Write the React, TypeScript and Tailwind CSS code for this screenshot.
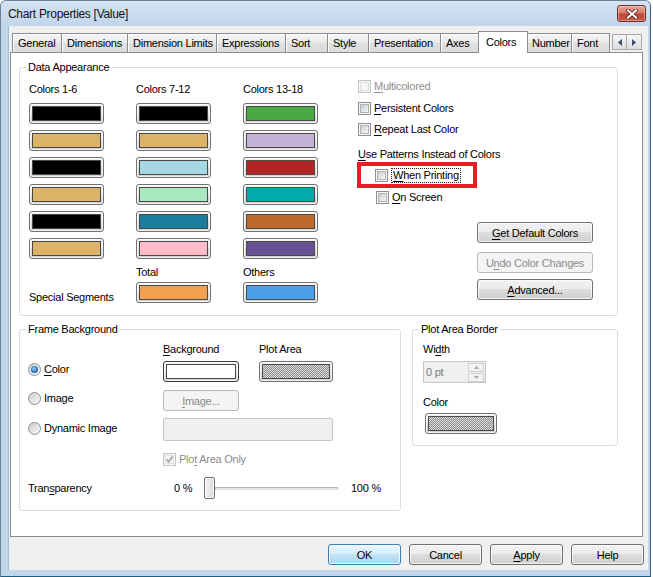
import React from "react";

const btnGrad =
  "bg-[image:linear-gradient(#f2f2f2,#ebebeb_50%,#dddddd_50%,#cfcfcf)]";

function U({ children }: { children: React.ReactNode }) {
  return <span className="underline decoration-1 underline-offset-[2px]">{children}</span>;
}

function Swatch({ color, w = "w-[75px]", focused }: { color: string; w?: string; focused?: boolean }) {
  return (
    <div
      className={`h-[21px] ${w} rounded-[3px] border ${
        focused ? "border-[#3c3c3c]" : "border-[#707070]"
      } bg-[image:linear-gradient(#f4f4f4,#e9e9e9_50%,#dcdcdc_50%,#d2d2d2)] p-[2px] shadow-[inset_0_0_0_1px_rgba(255,255,255,0.7)]`}
    >
      <div className={`h-full w-full border border-[#4a4a4a] ${color}`} />
    </div>
  );
}

const checker =
  "bg-[image:repeating-conic-gradient(#8c8c8c_0%_25%,#dedede_0%_50%)] bg-[length:2px_2px]";

function Check({ disabled, checked }: { disabled?: boolean; checked?: boolean }) {
  return (
    <div
      className={`flex h-[13px] w-[13px] shrink-0 items-center justify-center border ${
        disabled ? "border-[#c4c4c4]" : "border-[#8e8f8f]"
      } bg-[#f6f6f6] p-[1px]`}
    >
      <div
        className={`relative h-full w-full border ${
          disabled
            ? "border-[#dedede] bg-[#f4f4f4]"
            : "border-[#aeb3b9] bg-[image:linear-gradient(135deg,#c9cccf,#f7f7f7)]"
        }`}
      >
        {checked && (
          <svg viewBox="0 0 9 9" className="absolute left-[-1px] top-[-1px] h-[9px] w-[9px]">
            <path d="M1.5 4.5 L3.6 6.8 L7.6 1.5" fill="none" stroke="#a2a2a2" strokeWidth="1.6" />
          </svg>
        )}
      </div>
    </div>
  );
}

function Radio({ checked }: { checked?: boolean }) {
  return (
    <div className="flex h-[13px] w-[13px] shrink-0 items-center justify-center rounded-full border border-[#8e8f8f] bg-[image:linear-gradient(135deg,#c8cbce,#fbfbfb)]">
      {checked && (
        <div className="h-[7px] w-[7px] rounded-full bg-[image:radial-gradient(circle_at_45%_40%,#9ad4ff,#2a74b8_55%,#0f3e6e)]" />
      )}
    </div>
  );
}

function Btn({
  children,
  w,
  disabled,
  def,
}: {
  children: React.ReactNode;
  w: string;
  disabled?: boolean;
  def?: boolean;
}) {
  const look = disabled
    ? "border-[#b5b9bc] bg-[#f4f4f4] text-[#8a8a8a]"
    : def
    ? "border-[#3c7fb1] bg-[image:linear-gradient(#e8f5fc,#d8eefb_50%,#bfe3f8_50%,#a9d8f3)] shadow-[inset_0_0_0_1px_rgba(255,255,255,0.8)]"
    : `border-[#707070] ${btnGrad} shadow-[inset_0_0_0_1px_rgba(255,255,255,0.75)]`;
  return (
    <div
      className={`flex h-[21px] ${w} shrink-0 items-center justify-center rounded-[3px] border leading-[14px] ${look}`}
    >
      {children}
    </div>
  );
}

function Group({
  label,
  className,
  children,
}: {
  label: string;
  className: string;
  children: React.ReactNode;
}) {
  return (
    <div className={`relative shrink-0 rounded-[3px] border border-[#d5dfe5] ${className}`}>
      <span className="absolute left-[6px] top-[-8px] whitespace-nowrap bg-white px-[2px] leading-[14px]">
        {label}
      </span>
      {children}
    </div>
  );
}

const tabs: { t: string; w: string; sel?: boolean }[] = [
  { t: "General", w: "w-[49px]" },
  { t: "Dimensions", w: "w-[66px]" },
  { t: "Dimension Limits", w: "w-[89px]" },
  { t: "Expressions", w: "w-[69px]" },
  { t: "Sort", w: "w-[42px]" },
  { t: "Style", w: "w-[41px]" },
  { t: "Presentation", w: "w-[72px]" },
  { t: "Axes", w: "w-[40px]" },
  { t: "Colors", w: "w-[50px]", sel: true },
  { t: "Number", w: "w-[45px]" },
  { t: "Font", w: "w-[39px]" },
];

const swatchRows: string[][] = [
  ["bg-[#000000]", "bg-[#000000]", "bg-[#4aa845]"],
  ["bg-[#dbb46a]", "bg-[#dbb46a]", "bg-[#c3b1d6]"],
  ["bg-[#000000]", "bg-[#a6d8e3]", "bg-[#b02526]"],
  ["bg-[#dbb46a]", "bg-[#aae9bf]", "bg-[#02aaaa]"],
  ["bg-[#000000]", "bg-[#1b7d9e]", "bg-[#bd6a2c]"],
  ["bg-[#dbb46a]", "bg-[#ffbcc9]", "bg-[#695293]"],
];

function CheckRow({
  label,
  disabled,
  className,
}: {
  label: React.ReactNode;
  disabled?: boolean;
  className: string;
}) {
  return (
    <div className={`flex h-[14px] items-center ${className}`}>
      <Check disabled={disabled} />
      <span className={`ml-[3px] whitespace-nowrap leading-[14px] ${disabled ? "text-[#8d8d8d]" : ""}`}>
        {label}
      </span>
    </div>
  );
}

export default function App() {
  return (
    <div className="h-[577px] w-[653px] bg-white font-['Liberation_Sans',Arial,sans-serif] text-[11px] tracking-[-0.25px] text-black">
      <div className="flex h-[577px] w-[651px] flex-col rounded-t-[6px] border border-[#6a819b] border-b-[#1d5f82] border-r-[#3d5c7c] bg-[#c3d7ec]">
        {/* title bar */}
        <div className="flex h-[25px] shrink-0 items-center justify-between rounded-t-[5px] bg-[image:linear-gradient(#d5e3f2,#c1d5eb)] pl-[7px] pr-[4px]">
          <span className="text-[12px] tracking-[-0.3px] text-[#111]">Chart Properties [Value]</span>
          <div className="flex h-[17px] w-[29px] items-center justify-center rounded-[3px] border border-[#6e2d28] bg-[image:linear-gradient(#e8a595,#d47a69_45%,#c2473a_55%,#c95a45)] shadow-[inset_0_0_0_1px_rgba(255,255,255,0.35)]">
            <svg viewBox="0 0 12 10" className="h-[10px] w-[12px]">
              <path d="M2 1.5 L10 8.5 M10 1.5 L2 8.5" stroke="#5a2420" strokeWidth="3.6" strokeLinecap="square" />
              <path d="M2 1.5 L10 8.5 M10 1.5 L2 8.5" stroke="#ffffff" strokeWidth="2" strokeLinecap="square" />
            </svg>
          </div>
        </div>

        {/* client area */}
        <div className="ml-[7px] flex h-[544px] w-[640px] shrink-0 flex-col border-l border-[#a9bbd0] bg-[#f0f0f0] pt-[5px]">
          {/* tabs */}
          <div className="-mb-[1px] ml-[3px] flex h-[22px] items-end">
            {tabs.map((tab, i) =>
              tab.sel ? (
                <div
                  key={tab.t}
                  className={`relative z-10 -mx-[2px] flex h-[22px] ${tab.w} items-center border-x border-t border-[#898c95] bg-white pl-[7px] pb-[1px]`}
                >
                  {tab.t}
                </div>
              ) : (
                <div
                  key={tab.t}
                  className={`flex h-[20px] ${tab.w} shrink-0 items-center whitespace-nowrap border-l border-t border-[#898c95] ${
                    i === tabs.length - 1 ? "border-r" : ""
                  } bg-[image:linear-gradient(#f5f5f5,#e9e9e9_50%,#dfdfdf_50%,#dcdcdc)] pl-[5px] shadow-[inset_1px_1px_0_#ffffff]`}
                >
                  {tab.t}
                </div>
              )
            )}
            <div className="mb-[3px] ml-[2px] flex">
              <div className="flex h-[16px] w-[15px] items-center justify-center border border-[#a5a9b0] bg-[image:linear-gradient(#f6f6f6,#dedede)]">
                <svg viewBox="0 0 4 7" className="h-[7px] w-[4px]">
                  <path d="M4 0 L0 3.5 L4 7 Z" fill="#3b4e72" />
                </svg>
              </div>
              <div className="flex h-[16px] w-[15px] items-center justify-center border border-l-0 border-[#a5a9b0] bg-[image:linear-gradient(#f6f6f6,#dedede)]">
                <svg viewBox="0 0 4 7" className="h-[7px] w-[4px]">
                  <path d="M0 0 L4 3.5 L0 7 Z" fill="#3b4e72" />
                </svg>
              </div>
            </div>
          </div>

          {/* panel */}
          <div className="ml-[1px] h-[485px] w-[633px] shrink-0 border border-[#898c95] bg-white">
            <Group label="Data Appearance" className="ml-[8px] mt-[14px] h-[249px] w-[599px]">
              <div className="flex">
                <div className="w-[338px] shrink-0 pl-[9px]">
                  <div className="mt-[14px] grid grid-cols-[75px_75px_75px] gap-x-[32px] leading-[14px]">
                    <span>Colors 1-6</span>
                    <span>Colors 7-12</span>
                    <span>Colors 13-18</span>
                  </div>
                  <div className="mt-[7px] grid grid-cols-[75px_75px_75px] gap-x-[32px] gap-y-[6px]">
                    {swatchRows.flat().map((c, i) => (
                      <Swatch key={i} color={c} />
                    ))}
                  </div>
                  <div className="mt-[6px] grid grid-cols-[75px_75px_75px] gap-x-[32px] leading-[14px]">
                    <span />
                    <span>Total</span>
                    <span>Others</span>
                  </div>
                  <div className="mt-[3px] grid grid-cols-[75px_75px_75px] items-end gap-x-[32px]">
                    <span className="-mb-[1px] whitespace-nowrap leading-[14px]">Special Segments</span>
                    <Swatch color="bg-[#f0a04f]" />
                    <Swatch color="bg-[#4c9ee8]" />
                  </div>
                </div>

                <div className="flex flex-col">
                  <CheckRow
                    className="mt-[11px]"
                    disabled
                    label={
                      <>
                        <U>M</U>ulticolored
                      </>
                    }
                  />
                  <CheckRow
                    className="mt-[8px]"
                    label={
                      <>
                        <U>P</U>ersistent Colors
                      </>
                    }
                  />
                  <CheckRow
                    className="mt-[7px]"
                    label={
                      <>
                        <U>R</U>epeat Last Color
                      </>
                    }
                  />
                  <div className="mt-[11px] whitespace-nowrap leading-[14px]">
                    <U>U</U>se Patterns Instead of Colors
                  </div>
                  <div className="-ml-[1px] mt-[1px] flex h-[26px] w-[120px] items-center border-[4px] border-[#ed1c24] pl-[14px]">
                    <Check />
                    <span className="ml-[3px] whitespace-nowrap border border-dotted border-[#222] px-[1px] leading-[13px]">
                      <U>W</U>hen Printing
                    </span>
                  </div>
                  <CheckRow
                    className="ml-[18px] mt-[2px]"
                    label={
                      <>
                        <U>O</U>n Screen
                      </>
                    }
                  />
                  <div className="ml-[119px] mt-[18px] flex flex-col">
                    <Btn w="w-[116px]">
                      <span>
                        <U>G</U>et Default Colors
                      </span>
                    </Btn>
                    <div className="mt-[9px]">
                      <Btn w="w-[116px]" disabled>
                        <span>
                          U<U>n</U>do Color Changes
                        </span>
                      </Btn>
                    </div>
                    <div className="mt-[6px]">
                      <Btn w="w-[116px]">
                        <span>
                          <U>A</U>dvanced...
                        </span>
                      </Btn>
                    </div>
                  </div>
                </div>
              </div>
            </Group>

            <div className="ml-[8px] mt-[13px] flex items-start">
              <Group label="Frame Background" className="h-[182px] w-[382px]">
                <div className="mt-[12px] flex h-[14px] items-center leading-[14px]">
                  <div className="w-[143px] shrink-0" />
                  <div className="w-[96px] shrink-0">
                    <U>B</U>ackground
                  </div>
                  <div>Plot Area</div>
                </div>
                <div className="mt-[5px] flex h-[22px] items-start">
                  <div className="mt-[1px] flex h-[14px] w-[143px] shrink-0 items-center pl-[8px]">
                    <Radio checked />
                    <span className="ml-[3px]">
                      <U>C</U>olor
                    </span>
                  </div>
                  <div className="w-[96px] shrink-0">
                    <Swatch color="bg-white" w="w-[76px]" focused />
                  </div>
                  <Swatch color={checker} w="w-[74px]" />
                </div>
                <div className="mt-[7px] flex h-[21px] items-start">
                  <div className="mt-[1px] flex h-[14px] w-[143px] shrink-0 items-center pl-[8px]">
                    <Radio />
                    <span className="ml-[3px]">Image</span>
                  </div>
                  <Btn w="w-[76px]" disabled>
                    <span>
                      <U>I</U>mage...
                    </span>
                  </Btn>
                </div>
                <div className="mt-[7px] flex h-[23px] items-start">
                  <div className="mt-[3px] flex h-[14px] w-[143px] shrink-0 items-center pl-[8px]">
                    <Radio />
                    <span className="ml-[3px] whitespace-nowrap">Dynamic Image</span>
                  </div>
                  <div className="h-[23px] w-[170px] rounded-[2px] border border-[#c2c6ca] bg-[#f0f0f0]" />
                </div>
                <div className="mt-[11px] flex h-[14px] items-center pl-[143px]">
                  <Check disabled checked />
                  <span className="ml-[3px] whitespace-nowrap text-[#8d8d8d]">
                    Plo<U>t</U> Area Only
                  </span>
                </div>
                <div className="mt-[11px] flex h-[22px] items-center">
                  <div className="w-[154px] shrink-0 pl-[8px]">
                    Tran<U>s</U>parency
                  </div>
                  <div className="w-[30px] shrink-0">0 %</div>
                  <div className="flex h-[22px] w-[134px] shrink-0 items-center">
                    <div className="h-[22px] w-[11px] shrink-0 rounded-[2px] border border-[#707070] bg-[image:linear-gradient(90deg,#f5f5f5,#dadada)] shadow-[inset_0_0_0_1px_rgba(255,255,255,0.7)]" />
                    <div className="h-[3px] flex-1 border border-[#b4b4b4] border-b-[#e2e2e2] bg-[#e6e6e6]" />
                  </div>
                  <div className="ml-[13px] whitespace-nowrap">100 %</div>
                </div>
              </Group>

              <Group label="Plot Area Border" className="ml-[11px] h-[117px] w-[206px]">
                <div className="mt-[12px] pl-[10px] leading-[14px]">
                  Wi<U>d</U>th
                </div>
                <div className="ml-[10px] mt-[5px] flex h-[22px] w-[63px] items-center justify-between border border-[#c2c6ca] bg-[#f0f0f0] pl-[2px] pr-[1px]">
                  <span className="text-[#7a7a7a]">0 pt</span>
                  <div className="flex flex-col">
                    <div className="flex h-[9px] w-[16px] items-center justify-center border border-[#cfd2d5] bg-[#f2f2f2]">
                      <svg viewBox="0 0 5 3" className="h-[3px] w-[5px]">
                        <path d="M0 3 L2.5 0 L5 3 Z" fill="#a8a8a8" />
                      </svg>
                    </div>
                    <div className="mt-[1px] flex h-[9px] w-[16px] items-center justify-center border border-[#cfd2d5] bg-[#f2f2f2]">
                      <svg viewBox="0 0 5 3" className="h-[3px] w-[5px]">
                        <path d="M0 0 L2.5 3 L5 0 Z" fill="#a8a8a8" />
                      </svg>
                    </div>
                  </div>
                </div>
                <div className="mt-[12px] pl-[10px] leading-[14px]">Color</div>
                <div className="ml-[12px] mt-[4px]">
                  <Swatch color={checker} w="w-[72px]" />
                </div>
              </Group>
            </div>
          </div>

          {/* dialog buttons */}
          <div className="ml-[319px] mt-[7px] flex gap-[8px]">
            <Btn w="w-[73px]" def>
              OK
            </Btn>
            <Btn w="w-[73px]">Cancel</Btn>
            <Btn w="w-[73px]">
              <span>
                <U>A</U>pply
              </span>
            </Btn>
            <Btn w="w-[73px]">Help</Btn>
          </div>
        </div>
      </div>
    </div>
  );
}
